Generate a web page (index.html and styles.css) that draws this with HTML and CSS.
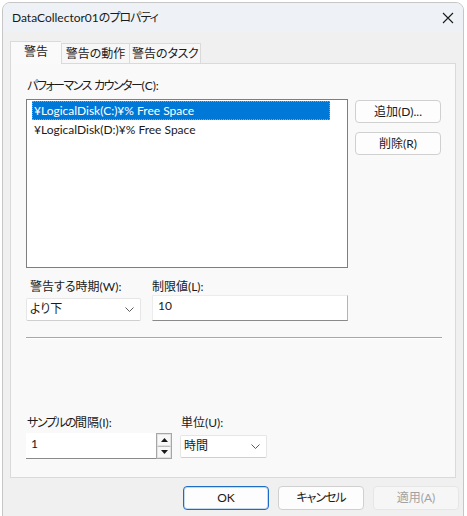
FILE: index.html
```html
<!DOCTYPE html>
<html lang="ja">
<head>
<meta charset="utf-8">
<title>DataCollector01のプロパティ</title>
<link rel="stylesheet" href="styles.css">
</head>
<body>
<div class="window">
  <div class="titlebar">
    <span class="title">DataCollector01<span class="kana">のプロパティ</span></span>
    <span class="close"><svg width="12" height="12" viewBox="0 0 12 12"><path d="M1 1L11 11M11 1L1 11" stroke="#1b1b1b" stroke-width="1.1" fill="none"/></svg></span>
  </div>
  <div class="tabs">
    <div class="tab selected">警告</div>
    <div class="tab t2">警告の動作</div>
    <div class="tab t3">警告の<span class="kana-s">タスク</span></div>
  </div>
  <div class="panel">
    <div class="label first"><span class="kana-l">パフォーマンス</span> <span class="kana-l">カウンター</span>(C):</div>
    <div class="list-row">
      <div class="listbox">
        <div class="item active">¥LogicalDisk(C:)¥% Free Space</div>
        <div class="item">¥LogicalDisk(D:)¥% Free Space</div>
      </div>
      <div class="side-buttons">
        <div class="btn">追加(D)...</div>
        <div class="btn">削除(R)</div>
      </div>
    </div>
    <div class="grid-a">
      <div class="label l-when">警告する時期(W):</div>
      <div class="label">制限値(L):</div>
      <div class="combo c-when"><span>より下</span><svg class="chev" width="9" height="5" viewBox="0 0 9 5"><path d="M0.5 0.5L4.5 4.5L8.5 0.5" stroke="#5a5a5a" fill="none" stroke-width="1"/></svg></div>
      <div class="textbox">10</div>
    </div>
    <div class="separator"></div>
    <div class="grid-b">
      <div class="label"><span class="kana-l">サンプルの</span>間隔(I):</div>
      <div class="label">単位(U):</div>
      <div class="spin">
        <div class="spin-input">1</div>
        <div class="spin-btns">
          <div class="spin-btn"><svg width="7" height="4" viewBox="0 0 7 4"><path d="M0 4L3.5 0L7 4Z" fill="#1a1a1a"/></svg></div>
          <div class="spin-btn"><svg width="7" height="4" viewBox="0 0 7 4"><path d="M0 0L3.5 4L7 0Z" fill="#1a1a1a"/></svg></div>
        </div>
      </div>
      <div class="combo c-unit"><span>時間</span><svg class="chev" width="9" height="5" viewBox="0 0 9 5"><path d="M0.5 0.5L4.5 4.5L8.5 0.5" stroke="#5a5a5a" fill="none" stroke-width="1"/></svg></div>
    </div>
  </div>
  <div class="footer">
    <div class="btn fbtn ok">OK</div>
    <div class="btn fbtn"><span class="kana">キャンセル</span></div>
    <div class="btn fbtn disabled">適用(A)</div>
  </div>
</div>
</body>
</html>
```

FILE: styles.css
```css
html, body {
  margin: 0;
  padding: 0;
}
body {
  width: 467px;
  height: 516px;
  overflow: hidden;
  background: #ffffff;
  font-family: "Lato", "Noto Sans CJK JP", sans-serif;
  font-feature-settings: "palt" 1;
  font-size: 12px;
  color: #1a1a1a;
}
.kana { letter-spacing: -1px; }
.kana-s { letter-spacing: -0.5px; }
.kana-l { letter-spacing: -1.5px; }
.window {
  margin: 2px 0 0 2px;
  width: 462px;
  height: 520px;
  box-sizing: border-box;
  border: 1px solid #c6c6c6;
  border-radius: 8px 8px 0 0;
  background: #f0f0f0;
  overflow: hidden;
}
.titlebar {
  height: 29px;
  background: #eef2f6;
  display: flex;
  align-items: center;
  padding-left: 9px;
  padding-right: 4px;
}
.title {
  font-size: 12px;
  line-height: 16px;
  margin-top: 1px;
}
.close {
  margin-left: auto;
  width: 12px;
  height: 12px;
  margin-right: 5px;
  display: flex;
}
.tabs {
  display: flex;
  align-items: flex-end;
  height: 31px;
  padding-left: 7px;
}
.tab {
  height: 20px;
  box-sizing: border-box;
  border: 1px solid #dadada;
  border-bottom: none;
  background: #f7f7f7;
  display: flex;
  align-items: center;
  justify-content: center;
  line-height: 16px;
}
.tab.selected {
  height: 23px;
  width: 51px;
  background: #fafafa;
  position: relative;
  top: 1px;
  padding-bottom: 3px;
  border-right: none;
}
.tab.t2 { width: 68px; border-right: none; }
.tab.t3 { width: 72px; }
.panel {
  margin-left: 7px;
  width: 446px;
  height: 415px;
  box-sizing: border-box;
  border: 1px solid #dadada;
  background: #f9f9f9;
  padding: 14px 0 0 15px;
}
.label {
  line-height: 16px;
  white-space: nowrap;
}
.label.first { padding-left: 1px; }
.list-row {
  display: flex;
  gap: 7px;
  margin-top: 5px;
}
.listbox {
  width: 322px;
  height: 169px;
  box-sizing: border-box;
  border: 1px solid #7e7e7e;
  background: #ffffff;
  padding: 1px 17px 0 5px;
}
.item {
  height: 19px;
  line-height: 19px;
  padding-left: 2px;
  white-space: nowrap;
}
.item.active {
  background: #0078d7;
  color: #ffffff;
  outline: 1px dotted #7aa7d8;
  outline-offset: -1px;
}
.side-buttons {
  display: flex;
  flex-direction: column;
  gap: 9px;
  padding-top: 1px;
}
.btn {
  width: 86px;
  height: 23px;
  box-sizing: border-box;
  border: 1px solid #d0d0d0;
  border-radius: 4px;
  background: #fdfdfd;
  display: flex;
  align-items: center;
  justify-content: center;
  line-height: 16px;
}
.grid-a {
  display: grid;
  grid-template-columns: 115px 196px;
  column-gap: 11px;
  row-gap: 2px;
  align-items: center;
  margin-top: 11px;
}
.l-when { padding-left: 4px; }
.combo {
  height: 23px;
  box-sizing: border-box;
  background: #ffffff;
  border: 1px solid #e6e6e6;
  border-bottom-color: #cfcfcf;
  border-radius: 2px;
  display: flex;
  align-items: center;
  padding: 0 6px 0 3px;
  line-height: 16px;
}
.combo .chev { margin-left: auto; }
.textbox {
  height: 26px;
  box-sizing: border-box;
  background: #ffffff;
  border: 1px solid #ececec;
  border-right-color: #b4b4b4;
  border-bottom: 1px solid #8a8a8a;
  padding: 2px 0 0 5px;
  line-height: 16px;
  align-self: start;
  margin-top: -2px;
}
.separator {
  width: 416px;
  height: 0;
  border-top: 1px solid #a8a8a8;
  border-bottom: 1px solid #ffffff;
  margin-top: 16px;
}
.grid-b {
  display: grid;
  grid-template-columns: 146px 87px;
  column-gap: 8px;
  row-gap: 2px;
  align-items: center;
  margin-top: 76px;
}
.grid-b .label { padding-left: 1px; }
.spin {
  display: flex;
  height: 26px;
}
.spin-input {
  width: 130px;
  box-sizing: border-box;
  background: #ffffff;
  border-bottom: 1px solid #8a8a8a;
  padding: 3px 0 0 5px;
  line-height: 16px;
}
.spin-btns {
  width: 16px;
  box-sizing: border-box;
  border: 1px solid #a6a6a6;
  background: #f2f2f2;
  display: flex;
  flex-direction: column;
}
.spin-btn {
  flex: 1;
  display: flex;
  align-items: center;
  justify-content: center;
  border: 1px solid #e2e2e2;
  background: #f8f8f8;
}
.spin-btn + .spin-btn { border-top-color: #bdbdbd; }
.footer {
  display: flex;
  justify-content: flex-end;
  gap: 9px;
  padding: 8px 4px 0 0;
}
.fbtn { width: 86px; height: 24px; }
.ok {
  border-color: #1d6cc3;
  box-shadow: inset 0 0 0 1px rgba(29, 108, 195, 0.25);
}
.disabled {
  background: #f6f6f6;
  border-color: #e6e6e6;
  color: #a2a2a2;
}
```
